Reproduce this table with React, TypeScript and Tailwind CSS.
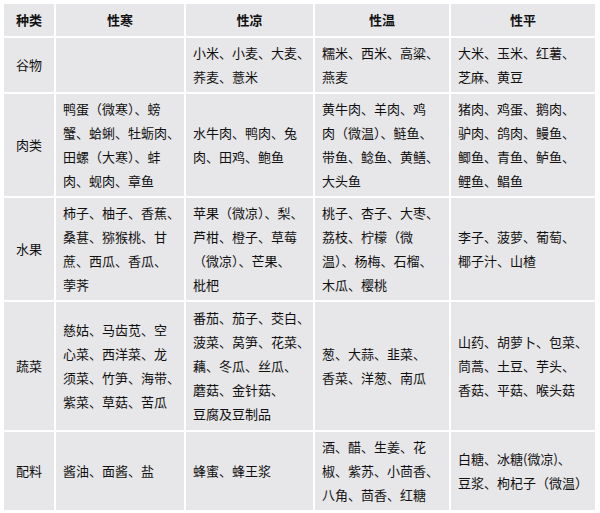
const font = {
  fontFamily: '"Noto Sans CJK SC", "Noto Sans", sans-serif',
};

type Row = {
  name: string;
  height: string;
  cells: string[][];
};

const HEADERS = ["种类", "性寒", "性凉", "性温", "性平"];

const ROWS: Row[] = [
  {
    name: "谷物",
    height: "h-[54px]",
    cells: [
      [],
      ["小米、小麦、大麦、", "荞麦、薏米"],
      ["糯米、西米、高粱、", "燕麦"],
      ["大米、玉米、红薯、", "芝麻、黄豆"],
    ],
  },
  {
    name: "肉类",
    height: "h-[102px]",
    cells: [
      ["鸭蛋（微寒）、螃", "蟹、蛤蜊、牡蛎肉、", "田螺（大寒）、蚌", "肉、蚬肉、章鱼"],
      ["水牛肉、鸭肉、兔", "肉、田鸡、鲍鱼"],
      ["黄牛肉、羊肉、鸡", "肉（微温）、鲢鱼、", "带鱼、鲶鱼、黄鳝、", "大头鱼"],
      ["猪肉、鸡蛋、鹅肉、", "驴肉、鸽肉、鳗鱼、", "鲫鱼、青鱼、鲈鱼、", "鲤鱼、鲳鱼"],
    ],
  },
  {
    name: "水果",
    height: "h-[102px]",
    cells: [
      ["柿子、柚子、香蕉、", "桑葚、猕猴桃、甘", "蔗、西瓜、香瓜、", "荸荠"],
      ["苹果（微凉）、梨、", "芦柑、橙子、草莓", "（微凉）、芒果、", "枇杷"],
      ["桃子、杏子、大枣、", "荔枝、柠檬（微", "温）、杨梅、石榴、", "木瓜、樱桃"],
      ["李子、菠萝、葡萄、", "椰子汁、山楂"],
    ],
  },
  {
    name: "蔬菜",
    height: "h-[128px]",
    cells: [
      ["慈姑、马齿苋、空", "心菜、西洋菜、龙", "须菜、竹笋、海带、", "紫菜、草菇、苦瓜"],
      ["番茄、茄子、茭白、", "菠菜、莴笋、花菜、", "藕、冬瓜、丝瓜、", "蘑菇、金针菇、", "豆腐及豆制品"],
      ["葱、大蒜、韭菜、", "香菜、洋葱、南瓜"],
      ["山药、胡萝卜、包菜、", "茼蒿、土豆、芋头、", "香菇、平菇、喉头菇"],
    ],
  },
  {
    name: "配料",
    height: "h-[78px]",
    cells: [
      ["酱油、面酱、盐"],
      ["蜂蜜、蜂王浆"],
      ["酒、醋、生姜、花", "椒、紫苏、小茴香、", "八角、茴香、红糖"],
      ["白糖、冰糖(微凉)、", "豆浆、枸杞子（微温）"],
    ],
  },
];

export default function App() {
  return (
    <div className="w-[600px] h-[513px] bg-white pt-[2px] pl-[2px]" style={font}>
      <table className="border-separate border-spacing-[2px] table-fixed w-[595px] text-[13px] leading-[24px] text-[#111]">
        <colgroup>
          <col className="w-[50px]" />
          <col className="w-[128px]" />
          <col className="w-[127px]" />
          <col className="w-[134px]" />
          <col className="w-[144px]" />
        </colgroup>
        <thead>
          <tr className="h-[32px]">
            {HEADERS.map((h) => (
              <th key={h} className="bg-[#e7e6e8] font-bold text-center align-middle p-0">
                {h}
              </th>
            ))}
          </tr>
        </thead>
        <tbody>
          {ROWS.map((row) => (
            <tr key={row.name} className={row.height}>
              <td className="bg-[#e7e6e8] text-center align-middle p-0">{row.name}</td>
              {row.cells.map((lines, i) => (
                <td key={i} className="bg-[#e7e6e8] align-middle pl-[7px] pr-0 py-0 whitespace-nowrap">
                  {lines.map((l, j) => (
                    <div key={j}>{l}</div>
                  ))}
                </td>
              ))}
            </tr>
          ))}
        </tbody>
      </table>
    </div>
  );
}
